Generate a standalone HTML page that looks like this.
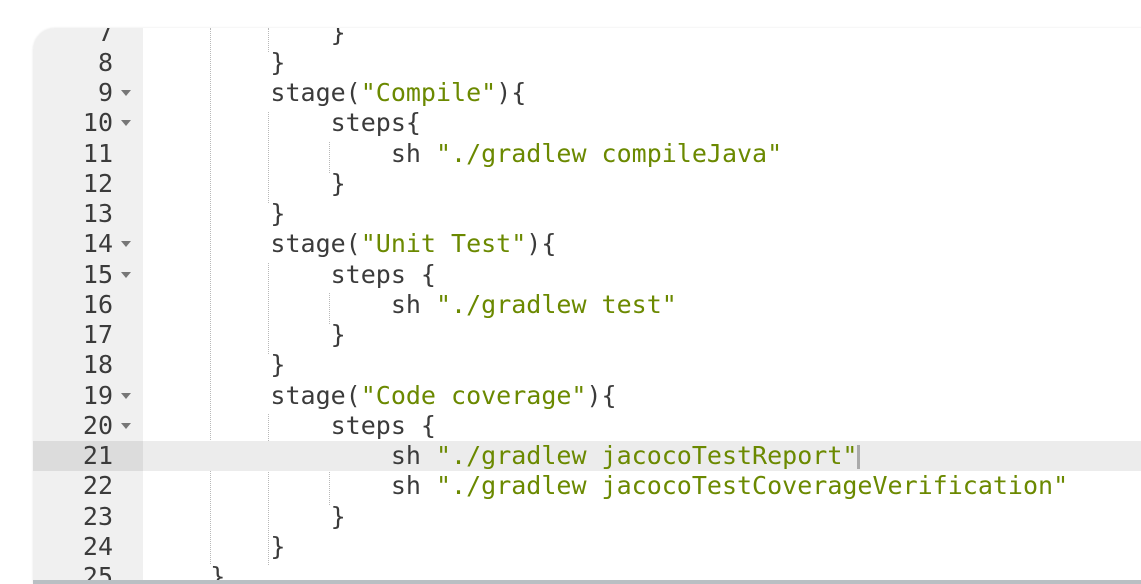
<!DOCTYPE html>
<html><head><style>
body{margin:0;width:1141px;height:584px;background:#fff;overflow:hidden;position:relative;font-family:"DejaVu Sans Mono","Liberation Mono",monospace;}
#ed{position:absolute;left:33px;top:28px;width:1120px;height:552px;background:#fff;border-top-left-radius:22px;overflow:hidden;border-bottom:4px solid #b9bfc3;box-shadow:0 0 2px #e6e6e6;}
#gut{position:absolute;left:0;top:0;width:110px;height:100%;background:#f0f0f0;}
.l{position:absolute;left:0;height:30.25px;line-height:30.25px;font-size:25px;color:#3b3b3b;white-space:pre;width:1120px;}
.n{position:absolute;left:0;width:80px;text-align:right;color:#3b3b3b;}
.a{position:absolute;left:88px;top:12px;width:0;height:0;border-left:5px solid transparent;border-right:5px solid transparent;border-top:6px solid #777;}
.c{position:absolute;left:117px;}
.s{color:#6b8900;}
.act{background:#ececec;}
.g{position:absolute;width:0;border-left:1px dotted #b8b8b8;}
</style></head><body>
<div id="ed">
<div id="gut"></div>
<div class="g" style="left:177px;top:0;height:536px"></div>
<div class="g" style="left:235px;top:0;height:24px"></div>
<div class="g" style="left:235px;top:84px;height:91px"></div>
<div class="g" style="left:235px;top:235px;height:91px"></div>
<div class="g" style="left:235px;top:386px;height:151px"></div>
<div class="g" style="left:296px;top:114px;height:31px"></div>
<div class="g" style="left:296px;top:265px;height:31px"></div>
<div class="g" style="left:296px;top:416px;height:61px"></div>
<div class="l" style="top:-10.5px"><span class="n">7</span><span class="c">            }</span></div>
<div class="l" style="top:19.75px"><span class="n">8</span><span class="c">        }</span></div>
<div class="l" style="top:50px"><span class="n">9</span><span class="a"></span><span class="c">        stage(<span class="s">"Compile"</span>){</span></div>
<div class="l" style="top:80.25px"><span class="n">10</span><span class="a"></span><span class="c">            steps{</span></div>
<div class="l" style="top:110.5px"><span class="n">11</span><span class="c">                sh <span class="s">"./gradlew compileJava"</span></span></div>
<div class="l" style="top:140.75px"><span class="n">12</span><span class="c">            }</span></div>
<div class="l" style="top:171px"><span class="n">13</span><span class="c">        }</span></div>
<div class="l" style="top:201.25px"><span class="n">14</span><span class="a"></span><span class="c">        stage(<span class="s">"Unit Test"</span>){</span></div>
<div class="l" style="top:231.5px"><span class="n">15</span><span class="a"></span><span class="c">            steps {</span></div>
<div class="l" style="top:261.75px"><span class="n">16</span><span class="c">                sh <span class="s">"./gradlew test"</span></span></div>
<div class="l" style="top:292px"><span class="n">17</span><span class="c">            }</span></div>
<div class="l" style="top:322.25px"><span class="n">18</span><span class="c">        }</span></div>
<div class="l" style="top:352.5px"><span class="n">19</span><span class="a"></span><span class="c">        stage(<span class="s">"Code coverage"</span>){</span></div>
<div class="l" style="top:382.75px"><span class="n">20</span><span class="a"></span><span class="c">            steps {</span></div>
<div class="l act" style="top:413px"><span style="position:absolute;left:0;top:0;width:110px;height:30.25px;background:#dcdcdc"></span><span class="n">21</span><span class="c">                sh <span class="s">"./gradlew jacocoTestReport"</span><span style="display:inline-block;width:3px;height:24px;background:#aaa;vertical-align:-5px"></span></span></div>
<div class="l" style="top:443.25px"><span class="n">22</span><span class="c">                sh <span class="s">"./gradlew jacocoTestCoverageVerification"</span></span></div>
<div class="l" style="top:473.5px"><span class="n">23</span><span class="c">            }</span></div>
<div class="l" style="top:503.75px"><span class="n">24</span><span class="c">        }</span></div>
<div class="l" style="top:534px"><span class="n">25</span><span class="c">    }</span></div>
</div>
</body></html>
